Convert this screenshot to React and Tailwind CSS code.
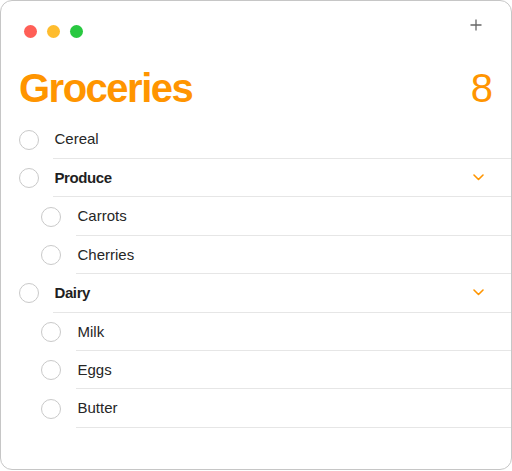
import React from "react";

const ORANGE = "#ff9500";

function Chevron() {
  return (
    <svg width="11" height="7" viewBox="0 0 11 7" fill="none">
      <path d="M1 1 L5.5 5.5 L10 1" stroke={ORANGE} strokeWidth="1.6" strokeLinecap="round" strokeLinejoin="round" />
    </svg>
  );
}

function Row({ label, child, bold, chevron }) {
  return (
    <div className="flex h-[38.43px]">
      <div className={child ? "w-[75px] shrink-0 flex items-center" : "w-[52px] shrink-0 flex items-center"}>
        <div
          className={
            child
              ? "ml-[39.5px] w-[20px] h-[20px] rounded-full border border-[#c9c9c9]"
              : "ml-[17.5px] w-[20px] h-[20px] rounded-full border border-[#c9c9c9]"
          }
        />
      </div>
      <div className="flex-1 flex items-center justify-between border-b border-[#e6e6e6] pl-[1.5px] pr-[27px]">
        <span
          className={
            bold
              ? "text-[15px] font-bold tracking-[-0.4px] text-[#1f1f1f] pt-[1px]"
              : "text-[15px] text-[#262626] pt-[1px]"
          }
        >
          {label}
        </span>
        {chevron && <Chevron />}
      </div>
    </div>
  );
}

export default function App() {
  return (
    <div
      className="w-[512px] h-[471px] bg-white"
      style={{ fontFamily: '"Liberation Sans", Arial, sans-serif' }}
    >
      <div className="w-[512px] h-[470px] rounded-[12px] border border-[#c6c6c6] bg-white overflow-hidden">
        <div className="flex justify-between items-start pt-[18px] pl-[22.5px] pr-[29.5px]">
          <div className="flex gap-[10px] mt-[5.5px]">
            <div className="w-[13px] h-[13px] rounded-full bg-[#ff5f57]" />
            <div className="w-[13px] h-[13px] rounded-full bg-[#febc2e]" />
            <div className="w-[13px] h-[13px] rounded-full bg-[#28c840]" />
          </div>
          <svg width="12" height="12" viewBox="0 0 12 12">
            <path d="M6 0.5 V11.5 M0.5 6 H11.5" stroke="#666666" strokeWidth="1.3" />
          </svg>
        </div>
        <div className="flex justify-between items-center mt-[30px] pl-[18px] pr-[18px] h-[40px]">
          <span className="text-[40px] leading-none font-bold tracking-[-1.5px]" style={{ color: ORANGE }}>
            Groceries
          </span>
          <span className="text-[40px] leading-none" style={{ color: ORANGE }}>
            8
          </span>
        </div>
        <div className="mt-[13px]">
          <Row label="Cereal" />
          <Row label="Produce" bold chevron />
          <Row label="Carrots" child />
          <Row label="Cherries" child />
          <Row label="Dairy" bold chevron />
          <Row label="Milk" child />
          <Row label="Eggs" child />
          <Row label="Butter" child />
        </div>
      </div>
    </div>
  );
}
